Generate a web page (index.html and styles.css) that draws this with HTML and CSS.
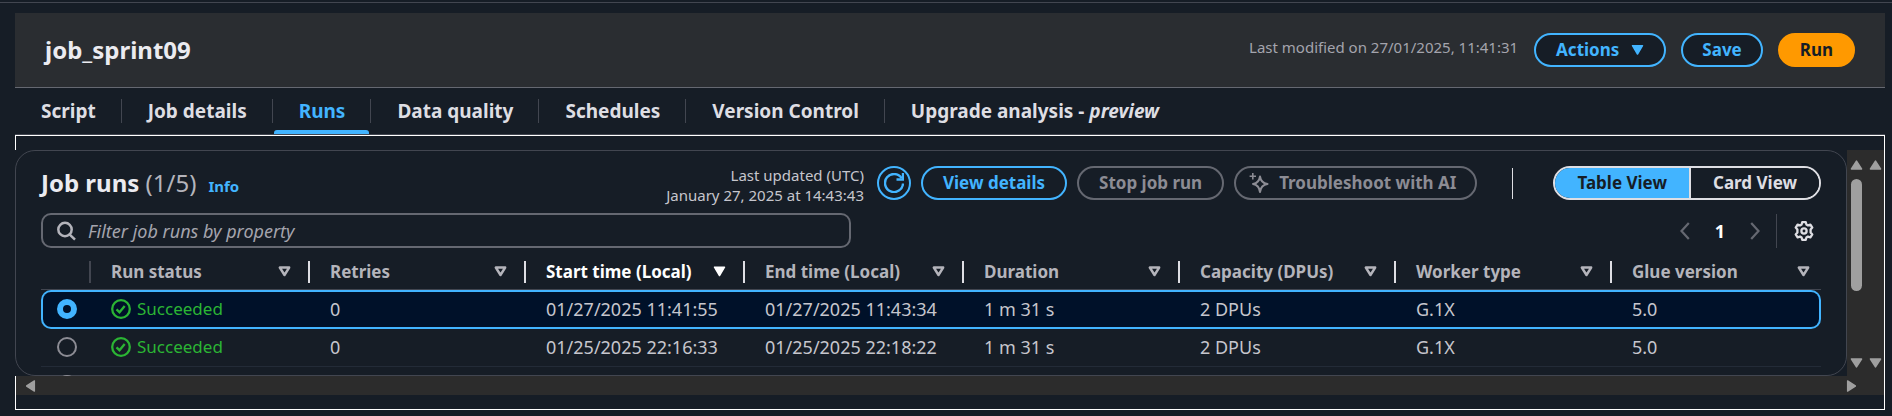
FILE: index.html
```html
<!DOCTYPE html>
<html lang="en">
<head>
<meta charset="utf-8">
<title>job_sprint09</title>
<link rel="stylesheet" href="styles.css">
</head>
<body>
<svg class="sprites" aria-hidden="true">
  <symbol id="sort" viewBox="0 0 13 11"><path d="M1.800 1.500h9.400L6.500 9z" fill="none" stroke="currentColor" stroke-width="2.400" stroke-linejoin="round"/></symbol>
  <symbol id="sort-on" viewBox="0 0 13 11"><path d="M1.500 1.200h10L6.500 9.500z" fill="currentColor" stroke="currentColor" stroke-width="1.500" stroke-linejoin="round"/></symbol>
  <symbol id="ok" viewBox="0 0 20 20"><g fill="none" stroke="currentColor" stroke-width="2.300"><circle cx="10" cy="10" r="8.800"/><path d="M5.500 10.300l3 2.900 5.200-6.300"/></g></symbol>
  <symbol id="tri" viewBox="0 0 12 10"><path d="M6 1.200L11 9H1z" fill="currentColor" stroke="currentColor" stroke-width="1.600" stroke-linejoin="round"/></symbol>
</svg>
<main class="page">
  <header class="job-header">
    <h1 class="job-title">job_sprint09</h1>
    <span class="modified">Last modified on 27/01/2025, 11:41:31</span>
    <div class="header-actions">
      <button class="btn actions" type="button">Actions <svg class="caret" viewBox="0 0 13 11"><use href="#sort-on"/></svg></button>
      <button class="btn save" type="button">Save</button>
      <button class="btn primary" type="button">Run</button>
    </div>
  </header>
  <nav class="tabs">
    <a class="tab" href="#">Script</a>
    <a class="tab" href="#">Job details</a>
    <a class="tab active" href="#" aria-current="page">Runs</a>
    <a class="tab" href="#">Data quality</a>
    <a class="tab" href="#">Schedules</a>
    <a class="tab" href="#">Version Control</a>
    <a class="tab" href="#">Upgrade analysis - <i>preview</i></a>
  </nav>
  <section class="frame">
    <div class="scroller">
      <div class="viewport">
        <div class="card">
          <div class="toolbar">
            <h2 class="card-title">Job runs <span class="count">(1/5)</span></h2>
            <a class="info" href="#">Info</a>
            <p class="updated">Last updated (UTC)<br>January 27, 2025 at 14:43:43</p>
            <button class="btn round" type="button" aria-label="Refresh"><svg class="icon" viewBox="0 0 20 20"><g fill="none" stroke="currentColor" stroke-width="2.400"><path d="M19 10.500A9 9 0 1 1 17.600 5.200"/><path d="M19 0v6.500h-6.500"/></g></svg></button>
            <button class="btn" type="button">View details</button>
            <button class="btn" type="button" disabled>Stop job run</button>
            <button class="btn ai" type="button" disabled><svg class="icon" viewBox="0 0 20 20"><g fill="none" stroke="currentColor"><path stroke-width="2" stroke-linejoin="round" d="M11 3.500Q11.900 10 18.500 11Q11.900 12 11 19Q10.100 12 4 11Q10.100 10 11 3.500z"/><path stroke-width="1.600" d="M3.800 0v6.400M.600 3.200H7"/></g></svg>Troubleshoot with AI</button>
            <span class="rule"></span>
            <div class="segments" role="group" aria-label="View">
              <button class="segment on" type="button" aria-pressed="true">Table View</button>
              <button class="segment" type="button" aria-pressed="false">Card View</button>
            </div>
          </div>
          <div class="filters">
            <label class="search">
              <svg class="icon" viewBox="0 0 20 20"><g fill="none" stroke="currentColor" stroke-width="2.500"><circle cx="9" cy="8.500" r="6.700"/><path d="M13.500 13.300l5.500 5.400"/></g></svg>
              <input type="text" placeholder="Filter job runs by property" aria-label="Filter job runs by property">
            </label>
            <div class="pager">
              <button class="plain dim" type="button" aria-label="Previous page"><svg class="chevron" viewBox="0 0 10 18"><path d="M8.800 1L1.500 9l7.300 8" fill="none" stroke="currentColor" stroke-width="2.200"/></svg></button>
              <span class="page-number">1</span>
              <button class="plain dim" type="button" aria-label="Next page"><svg class="chevron" viewBox="0 0 10 18"><path d="M1.200 1l7.300 8-7.300 8" fill="none" stroke="currentColor" stroke-width="2.200"/></svg></button>
              <button class="plain gear" type="button" aria-label="Preferences"><svg class="icon" viewBox="0 0 20 20"><g fill="none" stroke="currentColor" stroke-width="2.300" stroke-linejoin="round"><path d="M8.200 1.200h3.600l.6 2.300 1.500.9 2.500-.8 1.900 3-1.700 1.900v3l1.700 1.900-1.900 3-2.500-.8-1.500.9-.6 2.300H8.200l-.6-2.300-1.500-.9-2.500.8-1.900-3 1.700-1.900v-3L1.700 6.600l1.900-3 2.500.8 1.500-.9z"/><circle cx="10" cy="10" r="2.600"/></g></svg></button>
            </div>
          </div>
          <table class="runs">
            <colgroup><col class="c-pick"><col class="c-wide"><col class="c-std"><col class="c-wide"><col class="c-wide"><col class="c-std"><col class="c-std"><col class="c-std"><col></colgroup>
            <thead>
              <tr>
                <th class="pick" aria-label="Selection"></th>
                <th><div class="th">Run status<svg class="sort"><use href="#sort"/></svg></div></th>
                <th><div class="th">Retries<svg class="sort"><use href="#sort"/></svg></div></th>
                <th class="sorted"><div class="th">Start time (Local)<svg class="sort"><use href="#sort-on"/></svg></div></th>
                <th><div class="th">End time (Local)<svg class="sort"><use href="#sort"/></svg></div></th>
                <th><div class="th">Duration<svg class="sort"><use href="#sort"/></svg></div></th>
                <th><div class="th">Capacity (DPUs)<svg class="sort"><use href="#sort"/></svg></div></th>
                <th><div class="th">Worker type<svg class="sort"><use href="#sort"/></svg></div></th>
                <th><div class="th">Glue version<svg class="sort"><use href="#sort"/></svg></div></th>
              </tr>
            </thead>
            <tbody>
              <tr class="selected">
                <td><input class="radio" type="radio" name="run" aria-label="Run 01/27/2025 11:41:55" checked></td>
                <td><span class="status"><svg class="icon"><use href="#ok"/></svg>Succeeded</span></td>
                <td>0</td><td>01/27/2025 11:41:55</td><td>01/27/2025 11:43:34</td><td>1 m 31 s</td><td>2 DPUs</td><td>G.1X</td><td>5.0</td>
              </tr>
              <tr>
                <td><input class="radio" type="radio" name="run" aria-label="Run 01/25/2025 22:16:33"></td>
                <td><span class="status"><svg class="icon"><use href="#ok"/></svg>Succeeded</span></td>
                <td>0</td><td>01/25/2025 22:16:33</td><td>01/25/2025 22:18:22</td><td>1 m 31 s</td><td>2 DPUs</td><td>G.1X</td><td>5.0</td>
              </tr>
              <tr>
                <td><input class="radio" type="radio" name="run" aria-label="Earlier run"></td>
                <td></td><td></td><td></td><td></td><td></td><td></td><td></td><td></td>
              </tr>
            </tbody>
          </table>
        </div>
      </div>
      <div class="vbar inner"><svg class="arrow"><use href="#tri"/></svg><span class="thumb"></span><svg class="arrow down"><use href="#tri"/></svg></div>
      <div class="vbar"><svg class="arrow"><use href="#tri"/></svg><svg class="arrow down"><use href="#tri"/></svg></div>
      <div class="hbar"><svg class="arrow left"><use href="#tri"/></svg><svg class="arrow right"><use href="#tri"/></svg></div>
    </div>
  </section>
</main>
</body>
</html>
```
FILE: styles.css
```css
* { box-sizing: border-box; }
body {
  margin: 0;
  min-height: 100vh;
  overflow: hidden;
  background: #161d26;
  color: #c6c6cd;
  font: 18px/24px "Noto Sans", "Open Sans", sans-serif;
}
h1, h2, p { margin: 0; }
a { text-decoration: none; }
button, input { font: inherit; }
svg { display: block; flex: none; }
.sprites { position: absolute; width: 0; height: 0; }
.icon { width: 20px; height: 20px; }

.page {
  margin-top: 2px;
  padding: 10px 7px 0 15px;
  border-top: 1px solid #424650;
}

.job-header {
  display: flex;
  align-items: center;
  height: 75px;
  padding: 0 30px;
  background: #2a2d31;
  border-bottom: 1px solid #656871;
}
.job-title { flex: 1; color: #ebebf0; font-size: 24px; line-height: 32px; font-weight: 700; }
.modified { margin-right: 16px; padding-bottom: 6px; color: #a4a4ad; font-size: 15px; line-height: 20px; }
.header-actions { display: flex; gap: 15px; }

.btn {
  display: flex;
  align-items: center;
  justify-content: center;
  gap: 12px;
  height: 34px;
  padding: 0 20px;
  border: 2px solid #42b4ff;
  border-radius: 20px;
  background: #161d26;
  color: #42b4ff;
  font-size: 17px;
  line-height: 24px;
  font-weight: 700;
  white-space: nowrap;
}
.btn:disabled { border-color: #656871; color: #8c8c94; }
.btn.primary { background: #ff9900; border-color: #ff9900; color: #161d26; }
.btn.save { padding: 0 19px; }
.btn.round { width: 34px; padding: 0; }
.btn.ai { padding: 0 19px 0 13px; gap: 10px; }
.caret { width: 13px; height: 14px; }

.tabs { display: flex; align-items: center; height: 47px; border-bottom: 1px solid #424650; }
.tab {
  position: relative;
  padding: 0 25px 0 26px;
  height: 24px;
  border-right: 1px solid #424650;
  color: #dedee3;
  font-size: 19px;
  font-weight: 700;
  line-height: 24px;
}
.tab:last-child { border-right: 0; }
.tab.active { color: #42b4ff; }
.tab.active::after {
  content: "";
  position: absolute;
  left: 1px;
  right: 1px;
  bottom: -11px;
  height: 4px;
  border-radius: 3px 3px 0 0;
  background: #42b4ff;
}

.frame { padding: 14px 0; border: 1px solid #fff; }
.scroller { display: grid; grid-template-columns: 1fr 19px 18px; grid-template-rows: 226px 19px; background: #2c2c2c; }
.viewport { min-width: 0; margin-left: -1px; overflow: hidden; background: #161d26; }
.card { height: 226px; padding: 15px 25px 0; border: 1px solid #424650; border-radius: 20px; }

.toolbar { display: flex; align-items: center; gap: 10px; height: 34px; }
.card-title { color: #ebebf0; font-size: 24px; line-height: 30px; font-weight: 700; white-space: nowrap; }
.count { color: #b4b4bb; font-weight: 400; }
.info { flex: 1; padding: 6px 0 0 2px; color: #42b4ff; font-size: 15px; line-height: 20px; font-weight: 700; }
.updated { margin-right: 3px; padding-top: 4px; font-size: 15px; line-height: 20px; text-align: right; }
.rule { width: 1px; height: 31px; margin: 0 30px 0 25px; background: #dedee3; }
.segments { display: flex; height: 34px; border: 2px solid #dedee3; border-radius: 20px; overflow: hidden; }
.segment { padding: 0 22px; border: 0; background: #161d26; color: #dedee3; font-size: 17px; font-weight: 700; white-space: nowrap; }
.segment.on { border-right: 2px solid #dedee3; background: #42b4ff; color: #161d26; }

.filters { display: flex; align-items: center; justify-content: space-between; margin-top: 13px; }
.search {
  display: flex;
  align-items: center;
  gap: 12px;
  width: 810px;
  height: 35px;
  padding: 0 13px;
  border: 2px solid #656871;
  border-radius: 10px;
  color: #b4b4bb;
}
.search input { flex: 1; padding: 0; border: 0; outline: 0; background: none; color: #dedee3; }
.search input::placeholder { color: #a4a4ad; opacity: 1; font-style: italic; }
.pager { display: flex; align-items: center; }
.plain { padding: 0; border: 0; background: none; color: #dedee3; }
.dim { color: #656871; }
.chevron { width: 10px; height: 18px; }
.page-number { width: 60px; text-align: center; color: #fff; font-weight: 700; }
.gear { height: 34px; margin-left: 16px; padding: 0 7px 0 17px; border-left: 1px solid #424650; }

.runs { width: 100%; table-layout: fixed; border-collapse: separate; border-spacing: 0; }
.c-pick { width: 50px; }
.c-wide { width: 219px; }
.c-std { width: 216px; }
.runs th { height: 42px; padding: 6px 0 0; border-bottom: 1px solid #424650; color: #b4b4bb; font-size: 17px; font-weight: 700; text-align: left; }
.th { display: flex; align-items: center; justify-content: space-between; height: 22px; padding: 0 17px 0 20px; border-right: 2px solid #dedee3; white-space: nowrap; }
.runs th:last-child .th { padding-right: 11px; border-right: 0; }
.runs th.sorted { color: #fff; }
.runs th.pick { background: linear-gradient(#424650, #424650) right 13px / 2px 22px no-repeat; }
.sort { width: 13px; height: 11px; }
.runs td { height: 38px; padding: 0 0 2px 20px; border-bottom: 1px solid #232b37; white-space: nowrap; }
.runs td:first-child { padding-left: 16px; }
.runs .selected td { height: 39px; background: #001129; border-top: 2px solid #42b4ff; border-bottom: 2px solid #42b4ff; }
.runs .selected td:first-child { padding-left: 14px; border-left: 2px solid #42b4ff; border-radius: 10px 0 0 10px; }
.runs .selected td:last-child { border-right: 2px solid #42b4ff; border-radius: 0 10px 10px 0; }
.status { display: flex; align-items: center; gap: 6px; color: #2bb534; font-size: 17px; }
.radio { appearance: none; display: block; width: 20px; height: 20px; margin: 0; border: 2px solid #8c8c94; border-radius: 50%; }
.radio:checked { border: 6px solid #42b4ff; }

.vbar { display: flex; flex-direction: column; align-items: center; justify-content: space-between; padding: 10px 0 8px; color: #9f9f9f; }
.arrow { width: 13px; height: 10px; }
.down { transform: rotate(180deg); }
.left { transform: rotate(-90deg); }
.right { transform: rotate(90deg); }
.thumb { width: 11px; height: 112px; margin: 9px 0 auto; border-radius: 6px; background: #9f9f9f; }
.hbar { display: flex; grid-column: 1 / 3; align-items: center; justify-content: space-between; padding: 0 8px; color: #9f9f9f; }
```
